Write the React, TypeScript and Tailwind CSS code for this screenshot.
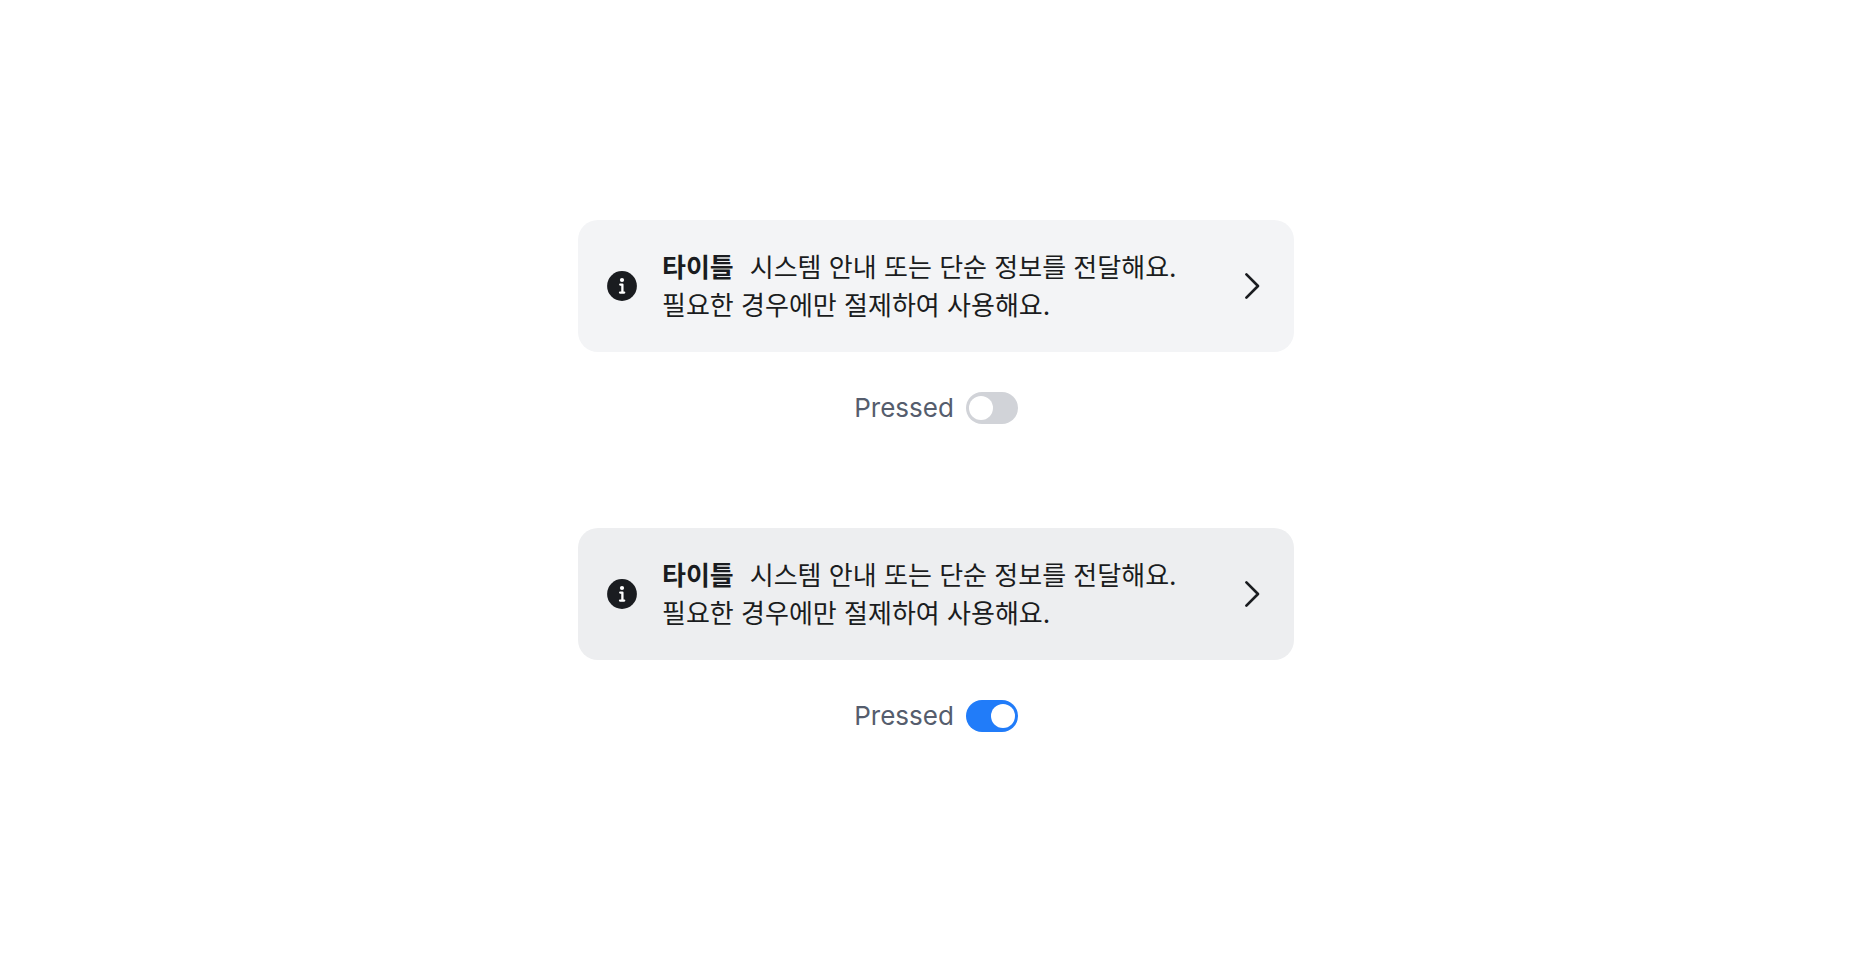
import { useState } from "react";

function InfoIcon() {
  return (
    <svg viewBox="0 0 30 30" className="size-[30px] shrink-0" aria-hidden="true">
      <circle cx="15" cy="15" r="14.9" fill="#1a1c20" />
      <circle cx="15" cy="9" r="2.1" fill="#fff" />
      <path
        d="M13.2 13.6H15.4V21.4M13 21.6H17.2"
        fill="none"
        stroke="#fff"
        strokeWidth="2.3"
        strokeLinecap="round"
        strokeLinejoin="round"
      />
    </svg>
  );
}

function ChevronIcon() {
  return (
    <svg viewBox="0 0 16 28" className="h-7 w-4 shrink-0" aria-hidden="true">
      <path
        d="M2.4 2.4L14 14L2.4 25.6"
        fill="none"
        stroke="#1a1c20"
        strokeWidth="2.7"
        strokeLinecap="round"
        strokeLinejoin="round"
      />
    </svg>
  );
}

function CalloutExample({ id, initialPressed }: { id: string; initialPressed: boolean }) {
  const [pressed, setPressed] = useState(initialPressed);

  return (
    <section className="flex w-full flex-col items-center gap-10">
      <button
        type="button"
        className={`flex w-full items-center rounded-[20px] py-[27px] pr-[34px] pl-[29px] text-left text-[26px] leading-[38px] text-[#1a1c20] ${
          pressed ? "bg-[#edeef0]" : "bg-[#f3f4f6]"
        }`}
      >
        <InfoIcon />
        <span className="ml-[25px] flex-1 pt-0.5">
          <strong className="mr-4 font-bold">타이틀</strong>
          시스템 안내 또는 단순 정보를 전달해요.
          <br />
          필요한 경우에만 절제하여 사용해요.
        </span>
        <ChevronIcon />
      </button>
      <div className="flex h-8 items-center gap-3">
        <label htmlFor={id} className="text-[26px] leading-8 text-[#555d6d]">
          Pressed
        </label>
        <input
          id={id}
          type="checkbox"
          role="switch"
          checked={pressed}
          onChange={(event) => setPressed(event.target.checked)}
          className="flex h-8 w-[52px] cursor-pointer appearance-none items-center rounded-full bg-[#d1d3d8] px-[3px] before:size-6 before:rounded-full before:bg-white before:content-[''] checked:justify-end checked:bg-[#217cf9]"
        />
      </div>
    </section>
  );
}

export default function App() {
  return (
    <main className="flex min-h-screen flex-col items-center justify-center bg-white px-6 pb-2 font-[Inter,'Noto_Sans_CJK_KR',sans-serif]">
      <div className="flex w-full max-w-[716px] flex-col gap-[104px]">
        <CalloutExample id="pressed-default" initialPressed={false} />
        <CalloutExample id="pressed-active" initialPressed={true} />
      </div>
    </main>
  );
}
